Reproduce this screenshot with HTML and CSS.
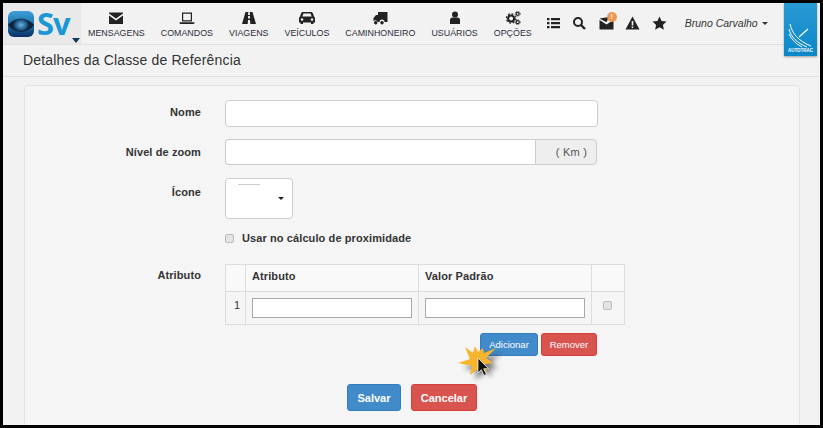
FILE: index.html
```html
<!DOCTYPE html>
<html lang="pt">
<head>
<meta charset="utf-8">
<title>Detalhes da Classe de Referência</title>
<link rel="stylesheet" href="styles.css">
</head>
<body>
<div class="frame">
  <header class="topbar">
    <div class="brand">
      <svg class="brand-eye" width="26" height="26" viewBox="0 0 26 26">
        <defs>
          <linearGradient id="eyeBg" x1="0" y1="0" x2="0" y2="1"><stop offset="0" stop-color="#3f9fd8"/><stop offset="0.55" stop-color="#1c6fa8"/><stop offset="1" stop-color="#0b2f66"/></linearGradient>
          <radialGradient id="eyeIris"><stop offset="0" stop-color="#6fb3dc"/><stop offset="0.7" stop-color="#1f5f8f"/><stop offset="1" stop-color="#0c2a45"/></radialGradient>
        </defs>
        <rect width="26" height="26" rx="6" fill="url(#eyeBg)"/>
        <path d="M0 14 C6 6 20 6 26 14 C20 23 6 23 0 14Z" fill="#10233a"/>
        <ellipse cx="13" cy="14" rx="8" ry="6.5" fill="url(#eyeIris)"/>
      </svg>
      <span class="brand-name">Sv</span>
      <span class="brand-caret"></span>
    </div>
    <nav class="mainnav">
      <a class="navitem">
        <svg class="ico" viewBox="0 0 16 14"><path d="M1 1.500h14v1L8 7.500 1 2.500z M1 4.500L8 9.500l7-5V13H1z"/></svg>
        <span>MENSAGENS</span>
      </a>
      <a class="navitem">
        <svg class="ico" viewBox="0 0 16 14"><path d="M3 1.500h10v9H3z M4.200 2.700v6.600h7.600V2.700z M0.500 11.300h15v.9l-1 .8h-13l-1-.8z" fill-rule="evenodd"/></svg>
        <span>COMANDOS</span>
      </a>
      <a class="navitem">
        <svg class="ico" viewBox="0 0 16 14"><path d="M4.500 1h2.800L7 4h2l-.3-3h2.800L15 13H9.300L9 9H7l-.3 4H1z M7.100 5l-.1 2.500h2L8.900 5z" fill-rule="evenodd"/></svg>
        <span>VIAGENS</span>
      </a>
      <a class="navitem">
        <svg class="ico" viewBox="0 0 16 14"><path d="M4 1h8c1 0 1.500 .5 2 1.500l1 3c.5 .5 1 1 1 2v4h-1.500v1.500h-2.500V11.500h-8V13H1.500v-1.500H0v-4c0-1 .5-1.500 1-2l1-3C2.500 1.500 3 1 4 1z M4.500 2.500l-1.200 3h9.400l-1.200-3z M3 7.200a1.300 1.300 0 1 0 .01 0z M13 7.200a1.300 1.300 0 1 0 .01 0z" fill-rule="evenodd"/></svg>
        <span>VEÍCULOS</span>
      </a>
      <a class="navitem">
        <svg class="ico" viewBox="0 0 16 14"><path d="M6 1h9.500v10H12.500a2.500 2.500 0 0 0-5 0H5.800a2.500 2.500 0 0 0-4.300-.7V7l2.500-3h2z M3.700 10a1.700 1.700 0 1 0 .01 0z M10 10a1.700 1.700 0 1 0 .01 0z"/></svg>
        <span>CAMINHONEIRO</span>
      </a>
      <a class="navitem">
        <svg class="ico" viewBox="0 0 16 14"><circle cx="8" cy="3.500" r="3"/><path d="M3 13V9c0-1.500 1-2.500 2.500-2.500h5C12 6.500 13 7.500 13 9v4z"/></svg>
        <span>USUÁRIOS</span>
      </a>
      <a class="navitem">
        <svg class="ico" viewBox="0 0 16 15"><circle cx="6" cy="8" r="3.200" fill="none" stroke="#222" stroke-width="2.200"/><circle cx="6" cy="8" r="5" fill="none" stroke="#222" stroke-width="1.400" stroke-dasharray="2 1.900"/><circle cx="13" cy="3" r="1.600" fill="none" stroke="#222" stroke-width="1.300"/><circle cx="13" cy="3" r="2.700" fill="none" stroke="#222" stroke-width=".8" stroke-dasharray="1.200 1"/><circle cx="13" cy="12" r="1.600" fill="none" stroke="#222" stroke-width="1.300"/><circle cx="13" cy="12" r="2.700" fill="none" stroke="#222" stroke-width=".8" stroke-dasharray="1.200 1"/></svg>
        <span>OPÇÕES</span>
      </a>
    </nav>
    <div class="tools">
      <svg class="tool" viewBox="0 0 15 14"><path d="M1 2h2.500v2.200H1z M5 2h9v2.200H5z M1 6h2.500v2.200H1z M5 6h9v2.200H5z M1 10h2.500v2.200H1z M5 10h9v2.200H5z"/></svg>
      <svg class="tool" viewBox="0 0 15 14"><circle cx="6" cy="6" r="4" fill="none" stroke="#222" stroke-width="2"/><path d="M9 9l4 4" stroke="#222" stroke-width="2.400" fill="none"/></svg>
      <span class="tool-mail">
        <svg class="tool" viewBox="0 0 15 14"><path d="M0.500 4l7 4.500L14.500 4v9.500H.5z M.5 2.500L10 1 7.500 6.200z"/></svg>
        <b class="badge">!</b>
      </span>
      <svg class="tool" viewBox="0 0 15 14"><path d="M7.500 .5L14.500 13.500H.5z M6.700 5v4.500h1.600V5z M6.700 10.500v1.600h1.600v-1.600z" fill-rule="evenodd"/></svg>
      <svg class="tool" viewBox="0 0 15 14"><path d="M7.500 .5l2.100 4.500 4.900.6-3.600 3.300 1 4.800-4.400-2.500-4.400 2.500 1-4.800L.5 5.600l4.900-.6z"/></svg>
    </div>
    <div class="user"><em>Bruno Carvalho</em><span class="caret"></span></div>
    <div class="autotrac">
      <svg width="26" height="26" viewBox="0 0 26 26"><path d="M2 2c2 9 8 17 21 22" fill="none" stroke="#fff" stroke-width="1"/><path d="M1 7c2 8 8 14 18 18" fill="none" stroke="#fff" stroke-width="1"/><path d="M1 12c3 6 7 10 13 13" fill="none" stroke="#fff" stroke-width="1"/><path d="M11 15l9-8" stroke="#fff" stroke-width="1.200" fill="none"/></svg>
      <span>AUTOTRAC</span>
    </div>
  </header>
  <div class="titlebar"><h1>Detalhes da Classe de Referência</h1></div>
  <main class="card">
    <form class="form">
      <label class="lbl lbl-nome">Nome</label>
      <input class="ctl ctl-nome" type="text">
      <label class="lbl lbl-zoom">Nível de zoom</label>
      <div class="group">
        <input class="group-input" type="text">
        <span class="addon">( Km )</span>
      </div>
      <label class="lbl lbl-icon">Ícone</label>
      <div class="iconpick"><span class="iconline"></span><span class="caret dark"></span></div>
      <span></span>
      <label class="check"><span class="box"></span>Usar no cálculo de proximidade</label>
      <label class="lbl lbl-attr">Atributo</label>
      <div class="attr">
        <table class="attrs">
          <thead><tr><th class="c-n"></th><th class="c-a">Atributo</th><th class="c-a">Valor Padrão</th><th class="c-x"></th></tr></thead>
          <tbody><tr><td class="num">1</td><td><input class="cell" type="text"></td><td><input class="cell" type="text"></td><td class="mid"><span class="box"></span></td></tr></tbody>
        </table>
        <div class="rowbtns">
          <button type="button" class="btn small blue">Adicionar</button>
          <button type="button" class="btn small red">Remover</button>
        </div>
      </div>
    </form>
    <div class="actions">
      <button type="button" class="btn big blue">Salvar</button>
      <button type="button" class="btn big red">Cancelar</button>
    </div>
    <svg class="pointer" width="46" height="46" viewBox="0 0 46 46">
      <defs><filter id="blur"><feGaussianBlur stdDeviation="2.500"/></filter></defs>
      <path d="M7 7L15 13 17 6 20 12 25 8 26 13 38 8 28 18 35 23 27 24 29 32 23 27 12 35 14 26 0 23 12 19z" fill="#222" opacity=".55" filter="url(#blur)" transform="translate(5 5)"/>
      <path d="M7 7L15 13 17 6 20 12 25 8 26 13 38 8 28 18 35 23 27 24 29 32 23 27 12 35 14 26 0 23 12 19z" fill="#f7b52e"/>
      <path d="M20 18v15l3.300-3.300 2.700 5.800 2.400-1.100-2.700-5.700h4.800z" fill="#111" stroke="#fff" stroke-width=".7"/>
    </svg>
  </main>
</div>
</body>
</html>
```

FILE: styles.css
```css
* { box-sizing: border-box; }
html, body { margin: 0; padding: 0; height: 100%; background: #000; overflow: hidden; }
body { font-family: "Liberation Sans", Arial, sans-serif; color: #333; }
.frame { width: 817px; height: 422px; margin: 3px 0 0 3px; background: #f2f2f2; overflow: hidden; position: relative; display: flex; flex-direction: column; }

.topbar { height: 42px; flex: none; display: flex; border-bottom: 1px solid #e2e2e2; }
.brand { width: 78px; height: 41px; background: #e9e9e9; position: relative; display: flex; align-items: center; padding-left: 5px; gap: 3px; }
.brand-eye { flex: none; margin-top: 1px; }
.brand-name { font: bold 31px/1 "Open Sans", "Liberation Sans", sans-serif; color: #1b97d5; letter-spacing: -1px; }
.brand-caret { position: absolute; left: 69px; top: 35px; border: 4px solid transparent; border-top: 5px solid #123a5c; border-bottom: 0; }

.mainnav { display: flex; margin-left: -1px; }
.navitem { display: flex; flex-direction: column; align-items: center; padding: 8px 8px 0; font-size: 8.880px; color: #2c2c3a; line-height: 11px; white-space: nowrap; }
.ico { width: 16px; height: 14px; fill: #222; margin-bottom: 3px; display: block; }

.tools { display: flex; align-items: center; gap: 11.500px; margin-left: 6px; height: 34px; padding-top: 5px; }
.tool { width: 15px; height: 14px; fill: #222; display: block; }
.tool-mail { position: relative; display: block; }
.badge { position: absolute; right: -3px; top: -4px; width: 10px; height: 10px; border-radius: 50%; background: #f0964e; color: #fff; font: bold 7px/10px "Liberation Sans", sans-serif; text-align: center; }
.user { margin-left: 18px; height: 40px; display: flex; align-items: center; font-size: 10.500px; color: #333; white-space: nowrap; }
.user em { letter-spacing: 0; }
.caret { display: inline-block; margin-left: 4px; border: 3.500px solid transparent; border-top: 3.500px solid #333; border-bottom: 0; }
.caret.dark { border-top-color: #222; }
.autotrac { position: absolute; left: 781px; top: 0; width: 33px; height: 53px; background: linear-gradient(#2a9ad3, #0a87c9); box-shadow: 0 1px 2px rgba(0,0,0,.35); display: flex; flex-direction: column; align-items: center; justify-content: flex-end; padding-bottom: 2px; color: #fff; }
.autotrac span { font: bold 4.500px/6px "Liberation Sans", sans-serif; }

.titlebar { height: 32px; flex: none; border-bottom: 1px solid #e2e2e2; padding: 7px 0 0 20px; }
.titlebar h1 { margin: 0; font-size: 14px; font-weight: normal; line-height: 17px; letter-spacing: .17px; color: #333; }

.card { position: relative; flex: none; margin: 8px 0 0 21px; width: 776px; height: 400px; background: #f5f5f5; border: 1px solid #e3e3e3; border-radius: 4px; padding-top: 14px; }
.form { display: grid; grid-template-columns: 176px 400px; column-gap: 24px; }
.lbl { font-size: 11px; font-weight: bold; text-align: right; letter-spacing: .1px; color: #333; line-height: 14px; }
.lbl-nome { padding-top: 5px; }
.lbl-zoom { padding-top: 6px; margin-top: 12px; }
.lbl-icon { padding-top: 7px; margin-top: 13px; }
.lbl-attr { margin-top: 19px; padding-top: 4px; }
.ctl-nome { width: 373px; height: 27px; border: 1px solid #ccc; border-radius: 4px; background: #fff; display: block; }
.group { display: flex; width: 372px; height: 26px; margin-top: 12px; }
.group-input { width: 310px; border: 1px solid #ccc; border-right: 0; border-radius: 4px 0 0 4px; background: #fff; display: block; }
.addon { flex: 1; border: 1px solid #ccc; border-radius: 0 4px 4px 0; background: #eee; font-size: 11px; line-height: 24px; text-align: right; padding-right: 9px; letter-spacing: .2px; color: #555; }
.iconpick { position: relative; width: 68px; height: 41px; margin-top: 13px; border: 1px solid #ccc; border-radius: 4px; background: #fff; }
.iconline { position: absolute; left: 12px; top: 5px; width: 22px; height: 1px; background: #ccc; }
.iconpick .caret { position: absolute; right: 8px; top: 18px; margin: 0; }
.check { display: flex; align-items: center; gap: 8px; margin-top: 12px; height: 14px; font-size: 11px; font-weight: bold; letter-spacing: .1px; white-space: nowrap; color: #333; }
.box { display: block; width: 9px; height: 9px; flex: none; border: 1px solid #bbb; border-radius: 2px; background: #e4e4e4; }
.attr { margin-top: 19px; }
.attrs { width: 400px; border-collapse: collapse; table-layout: fixed; font-size: 11px; letter-spacing: .1px; color: #333; }
.attrs th, .attrs td { border: 1px solid #ddd; padding: 0; }
.attrs th { height: 27px; background: #f9f9f9; text-align: left; padding: 0 6px 5px; font-weight: bold; }
.attrs td { height: 33px; padding: 0 6px; }
.c-n { width: 20px; }
.c-x { width: 33px; }
.attrs .num { padding: 0 0 6px 8px; }
.attrs .mid { padding: 0 14px 0 11px; }
.attrs .mid .box { margin: 0 0 6px; }
.cell { display: block; width: 160px; height: 20px; margin-top: -1px; border: 1px solid #a9a9a9; background: #fff; padding: 0; }
.rowbtns { display: flex; gap: 3px; margin-top: 8px; margin-left: 255px; }
.btn { font-family: "Liberation Sans", sans-serif; color: #fff; border-radius: 3px; border: 1px solid; padding: 0; }
.blue { background: #428bca; border-color: #357ebd; }
.red { background: #d9534f; border-color: #d43f3a; }
.small { height: 23px; font-size: 9.500px; }
.small.blue { width: 58px; }
.small.red { width: 56px; }
.actions { display: flex; justify-content: center; gap: 10px; margin-top: 28px; margin-left: 30px; width: 714px; }
.big { height: 27px; font-size: 11px; font-weight: bold; }
.big.blue { width: 54px; }
.big.red { width: 66px; }
.pointer { position: absolute; left: 433px; top: 254px; }
```
